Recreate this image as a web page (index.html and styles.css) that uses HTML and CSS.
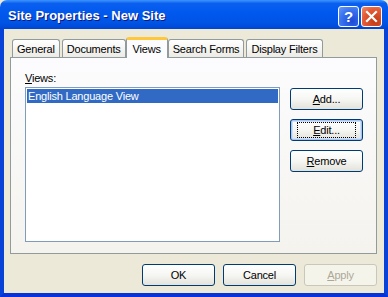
FILE: index.html
```html
<!DOCTYPE html>
<html lang="en">
<head>
    <meta charset="UTF-8">
    <title>Site Properties - New Site</title>
    <link rel="stylesheet" href="styles.css">
</head>
<body>
    <div class="window">
        <div class="titlebar">
            <span class="title">Site Properties - New Site</span>
            <div class="caption-buttons">
                <span class="cap-btn help">?</span>
                <span class="cap-btn close">
                    <svg width="13" height="13" viewBox="0 0 13 13">
                        <path d="M2 2 L11 11 M11 2 L2 11" stroke="#fff" stroke-width="2.2" stroke-linecap="square"/>
                    </svg>
                </span>
            </div>
        </div>
        <div class="frame">
            <div class="tabs">
                <div class="tab">General</div>
                <div class="tab">Documents</div>
                <div class="tab active">Views</div>
                <div class="tab">Search Forms</div>
                <div class="tab">Display Filters</div>
            </div>
            <div class="panel">
                <div class="views-col">
                    <label class="label"><u>V</u>iews:</label>
                    <div class="listbox">
                        <div class="item selected">English Language View</div>
                    </div>
                </div>
                <div class="side-buttons">
                    <button class="btn"><u>A</u>dd...</button>
                    <button class="btn focused"><span class="focus-ring"><u>E</u>dit...</span></button>
                    <button class="btn"><u>R</u>emove</button>
                </div>
            </div>
            <div class="dialog-buttons">
                <button class="btn">OK</button>
                <button class="btn">Cancel</button>
                <button class="btn disabled"><u>A</u>pply</button>
            </div>
        </div>
    </div>
</body>
</html>
```

FILE: styles.css
```css
/* XP style dialog */
body {
    margin: 0;
    background: #ffffff;
    font-family: "Liberation Sans", Arial, sans-serif;
    font-size: 11px;
    letter-spacing: -0.2px;
    color: #000000;
}
.window {
    width: 388px;
    height: 297px;
    display: flex;
    flex-direction: column;
    background-color: #ece9d8;
}
.titlebar {
    height: 29px;
    display: flex;
    align-items: center;
    justify-content: space-between;
    padding: 0 6px 0 8px;
    box-sizing: border-box;
    border-radius: 7px 7px 0 0;
    background: linear-gradient(to bottom, #3d95ff 0%, #0a5fef 12%, #0058ee 45%, #0054e3 80%, #0045d4 100%);
}
.title {
    color: #ffffff;
    font-weight: bold;
    font-size: 13px;
    letter-spacing: 0;
    text-shadow: 1px 1px 0 #0a1883;
    padding-top: 1px;
}
.caption-buttons {
    display: flex;
    gap: 2px;
    padding-top: 3px;
}
.cap-btn {
    width: 21px;
    height: 21px;
    box-sizing: border-box;
    border: 1px solid #ffffff;
    border-radius: 3px;
    display: flex;
    align-items: center;
    justify-content: center;
}
.help {
    background: radial-gradient(circle at 70% 75%, #1d4ad6 0%, #3b74f0 60%, #6a9cf8 100%);
    color: #ffffff;
    font-weight: bold;
    font-size: 15px;
    letter-spacing: 0;
}
.close {
    background: radial-gradient(circle at 70% 75%, #c23a12 0%, #e35a35 60%, #ef8d6f 100%);
}
.frame {
    flex: 1;
    display: flex;
    flex-direction: column;
    border-left: 4px solid #0842d6;
    border-right: 4px solid #0842d6;
    border-bottom: 4px solid #0831d9;
    padding: 8px 7px 0 6px;
}
.tabs {
    display: flex;
    align-items: flex-end;
    gap: 2px;
    padding-left: 2px;
    height: 20px;
    position: relative;
    z-index: 1;
}
.tab {
    height: 18px;
    box-sizing: border-box;
    padding: 2px 4px 0;
    border: 1px solid #919b9c;
    border-bottom: none;
    border-radius: 3px 3px 0 0;
    background: linear-gradient(to bottom, #ffffff, #ecebe6);
    line-height: 14px;
}
.tab.active {
    height: 21px;
    margin: 0 -2px -1px;
    padding: 2px 6px 0;
    border-top: 3px solid #ffc83c;
    background: #fcfcfe;
}
.panel {
    height: 197px;
    box-sizing: border-box;
    border: 1px solid #919b9c;
    background: linear-gradient(to bottom, #fcfcfe, #f4f3ee);
    display: flex;
    gap: 10px;
    padding: 14px 0 0 14px;
}
.views-col {
    display: flex;
    flex-direction: column;
}
.label {
    height: 15px;
}
.listbox {
    width: 255px;
    height: 155px;
    box-sizing: border-box;
    border: 1px solid #7f9db9;
    background: #ffffff;
    padding: 1px;
}
.item {
    height: 14px;
    line-height: 14px;
    padding-left: 1px;
}
.item.selected {
    background: #316ac5;
    color: #ffffff;
}
.side-buttons {
    display: flex;
    flex-direction: column;
    gap: 9px;
    padding-top: 16px;
}
.btn {
    width: 73px;
    height: 22px;
    box-sizing: border-box;
    border: 1px solid #003c74;
    border-radius: 3px;
    background: linear-gradient(to bottom, #ffffff 0%, #f6f6f3 50%, #e3e2da 100%);
    font-family: inherit;
    font-size: 11px;
    letter-spacing: -0.2px;
    color: #000000;
    padding: 0;
}
.btn.focused {
    box-shadow: inset 0 0 0 1px #a8c5f0, inset 0 0 0 2px #cfe0fa;
}
.focus-ring {
    display: inline-block;
    outline: 1px dotted #000000;
    outline-offset: 0;
    padding: 0 15px;
    line-height: 14px;
}
.btn.disabled {
    border-color: #c9c7ba;
    background: #f5f4ea;
    color: #aca899;
}
.dialog-buttons {
    display: flex;
    justify-content: flex-end;
    gap: 8px;
    padding-top: 10px;
}
```
